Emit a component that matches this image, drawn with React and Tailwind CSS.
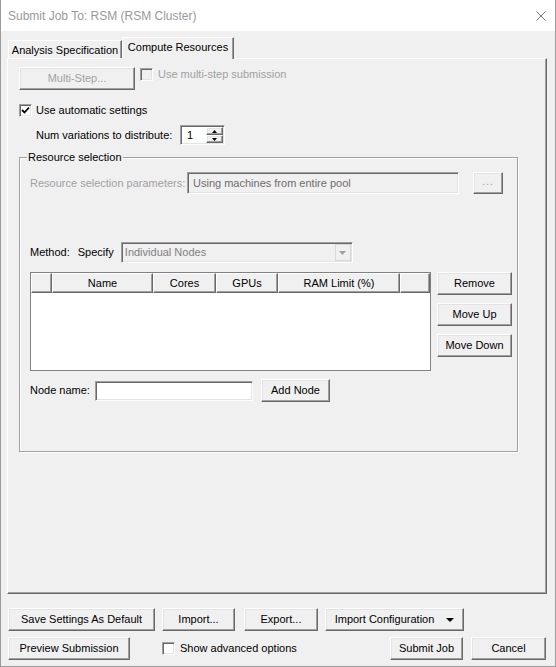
import React from "react"

const font = { fontFamily: '"Liberation Sans", Arial, sans-serif' }

// classic raised 3D button
function Btn({ children, className = "", disabled = false }) {
  return (
    <div
      className={`flex items-center justify-center shrink-0 border border-t-white border-l-white border-r-[#696969] border-b-[#696969] shadow-[inset_-1px_-1px_0_#a0a0a0,inset_1px_1px_0_#e3e3e3] bg-[#f0f0f0] text-[11px] ${disabled ? "text-[#a0a0a0]" : "text-black"} ${className}`}
    >
      {children}
    </div>
  )
}

function Check({ checked = false, disabled = false }) {
  return (
    <div
      className={`w-[13px] h-[13px] shrink-0 border border-t-[#a0a0a0] border-l-[#a0a0a0] border-r-white border-b-white shadow-[inset_1px_1px_0_#696969,inset_-1px_-1px_0_#e3e3e3] flex items-center justify-center ${disabled ? "bg-[#f0f0f0]" : "bg-white"}`}
    >
      {checked && (
        <svg width="9" height="9" viewBox="0 0 9 9">
          <path d="M1 4 L3.5 6.5 L8 1.5" stroke="#000" strokeWidth="1.8" fill="none" />
        </svg>
      )}
    </div>
  )
}

function Sunken({ className = "", children }) {
  return (
    <div
      className={`shrink-0 border border-t-[#a0a0a0] border-l-[#a0a0a0] border-r-white border-b-white shadow-[inset_1px_1px_0_#696969,inset_-1px_-1px_0_#e3e3e3] ${className}`}
    >
      {children}
    </div>
  )
}

function HeadCell({ w, children, grow = false }) {
  return (
    <div
      className={`h-full flex items-center justify-center border border-t-white border-l-white border-r-[#696969] border-b-[#696969] shadow-[inset_-1px_-1px_0_#a0a0a0] bg-[#f0f0f0] text-[11px] ${grow ? "flex-1" : "shrink-0"}`}
      style={w ? { width: w } : undefined}
    >
      {children}
    </div>
  )
}

export default function App() {
  return (
    <div
      className="w-[556px] h-[667px] bg-[#f0f0f0] border-x border-b border-[#9b9b9b] flex flex-col text-black text-[11px] overflow-hidden"
      style={font}
    >
      {/* title bar */}
      <div className="h-[31px] bg-white flex items-center justify-between pl-[7px] pr-[9px] shrink-0">
        <span className="text-[12px] text-[#999999]">Submit Job To: RSM (RSM Cluster)</span>
        <svg width="10" height="10" viewBox="0 0 10 10">
          <path d="M0.5 0.5 L9.5 9.5 M9.5 0.5 L0.5 9.5" stroke="#7a7a7a" strokeWidth="1" />
        </svg>
      </div>

      <div className="pl-[6px] mt-[6px]">
        {/* tabs */}
        <div className="flex items-end h-[21px] pl-[1px]">
          <div className="w-[114px] h-[18px] flex items-center justify-center pt-[1px] border border-b-0 border-t-white border-l-white border-r-[#696969] shadow-[inset_-1px_0_0_#a0a0a0]">
            Analysis Specification
          </div>
          <div className="relative z-10 -mb-px w-[112px] h-[22px] flex items-center justify-center pb-[2px] bg-[#f0f0f0] border border-b-0 border-t-white border-l-white border-r-[#696969] shadow-[inset_-1px_0_0_#a0a0a0]">
            Compute Resources
          </div>
        </div>

        {/* panel */}
        <div className="w-[540px] h-[536px] border border-t-white border-l-white border-r-[#696969] border-b-[#696969] shadow-[inset_-1px_-1px_0_#a0a0a0] pl-[11px] pt-[8px]">
          <div className="flex items-start h-[23px]">
            <Btn disabled className="w-[116px] h-[23px]">Multi-Step...</Btn>
            <div className="ml-[5px] mt-[1px]">
              <Check disabled />
            </div>
            <span className="ml-[5px] text-[#a0a0a0] leading-[15px]">Use multi-step submission</span>
          </div>

          <div className="flex items-center h-[13px] mt-[14px]">
            <Check checked />
            <span className="ml-[4px]">Use automatic settings</span>
          </div>

          <div className="flex items-center h-[20px] mt-[8px] pl-[17px]">
            <span className="w-[144px]">Num variations to distribute:</span>
            <Sunken className="w-[45px] h-[20px] bg-white flex items-center">
              <span className="pl-[6px] flex-1">1</span>
              <div className="flex flex-col w-[17px] h-[16px] mr-[1px]">
                <Btn className="w-[17px] h-[8px]">
                  <svg width="5" height="3" viewBox="0 0 5 3">
                    <path d="M0 3 L2.5 0 L5 3 Z" fill="#000" />
                  </svg>
                </Btn>
                <Btn className="w-[17px] h-[8px]">
                  <svg width="5" height="3" viewBox="0 0 5 3">
                    <path d="M0 0 L2.5 3 L5 0 Z" fill="#000" />
                  </svg>
                </Btn>
              </div>
            </Sunken>
          </div>

          {/* group box */}
          <div className="relative mt-[12px] w-[499px] h-[295px] border border-[#a0a0a0] shadow-[inset_1px_1px_0_#fff,1px_1px_0_#fff] pl-[10px] pt-[14px]">
            <span className="absolute -top-[8px] left-[7px] px-[1px] bg-[#f0f0f0] leading-[14px]">
              Resource selection
            </span>

            <div className="flex items-center h-[22px]">
              <span className="w-[157px] text-[#a0a0a0]">Resource selection parameters:</span>
              <Sunken className="w-[272px] h-[22px] bg-[#f0f0f0] flex items-center pl-[5px] text-[#6d6d6d]">
                Using machines from entire pool
              </Sunken>
              <Btn disabled className="ml-[14px] w-[30px] h-[22px]">
                <span className="-mt-[4px] tracking-[1px]">...</span>
              </Btn>
            </div>

            <div className="flex items-center h-[21px] mt-[48px]">
              <span>Method:</span>
              <span className="ml-[8px]">Specify</span>
              <Sunken className="ml-[7px] w-[232px] h-[21px] bg-[#f0f0f0] flex items-center pl-[3px] text-[#808080]">
                <span className="flex-1">Individual Nodes</span>
                <div className="w-[16px] h-[17px] mr-[1px] border border-[#d8d8d8] flex items-center justify-center">
                  <svg width="7" height="4" viewBox="0 0 7 4">
                    <path d="M0 0 L3.5 4 L7 0 Z" fill="#a0a0a0" />
                  </svg>
                </div>
              </Sunken>
            </div>

            <div className="flex mt-[9px]">
              <div className="w-[401px] h-[99px] bg-white border border-[#828282] flex flex-col">
                <div className="flex h-[20px]">
                  <HeadCell w={21} />
                  <HeadCell w={101}>Name</HeadCell>
                  <HeadCell w={63}>Cores</HeadCell>
                  <HeadCell w={62}>GPUs</HeadCell>
                  <HeadCell w={122}>RAM Limit (%)</HeadCell>
                  <HeadCell grow />
                </div>
              </div>
              <div className="flex flex-col gap-[8px] ml-[6px]">
                <Btn className="w-[75px] h-[23px]">Remove</Btn>
                <Btn className="w-[75px] h-[23px]">Move Up</Btn>
                <Btn className="w-[75px] h-[23px]">Move Down</Btn>
              </div>
            </div>

            <div className="flex items-center h-[23px] mt-[8px]">
              <span className="w-[65px]">Node name:</span>
              <Sunken className="w-[158px] h-[20px] bg-white" />
              <Btn className="ml-[8px] w-[69px] h-[23px]">Add Node</Btn>
            </div>
          </div>
        </div>
      </div>

      {/* footer buttons */}
      <div className="pl-[7px] mt-[14px] flex flex-col gap-[6px]">
        <div className="flex items-center">
          <Btn className="w-[147px] h-[23px]">Save Settings As Default</Btn>
          <Btn className="ml-[7px] w-[73px] h-[23px]">Import...</Btn>
          <Btn className="ml-[9px] w-[74px] h-[23px]">Export...</Btn>
          <Btn className="ml-[7px] w-[139px] h-[23px]">
            <span>Import Configuration</span>
            <svg className="ml-[12px]" width="8" height="4" viewBox="0 0 8 4">
              <path d="M0 0 L4 4 L8 0 Z" fill="#000" />
            </svg>
          </Btn>
        </div>
        <div className="flex items-center">
          <Btn className="w-[122px] h-[23px]">Preview Submission</Btn>
          <div className="ml-[32px]">
            <Check />
          </div>
          <span className="ml-[5px]">Show advanced options</span>
          <div className="flex-1" />
          <Btn className="w-[73px] h-[23px]">Submit Job</Btn>
          <Btn className="ml-[8px] mr-[9px] w-[75px] h-[23px]">Cancel</Btn>
        </div>
      </div>
    </div>
  )
}
